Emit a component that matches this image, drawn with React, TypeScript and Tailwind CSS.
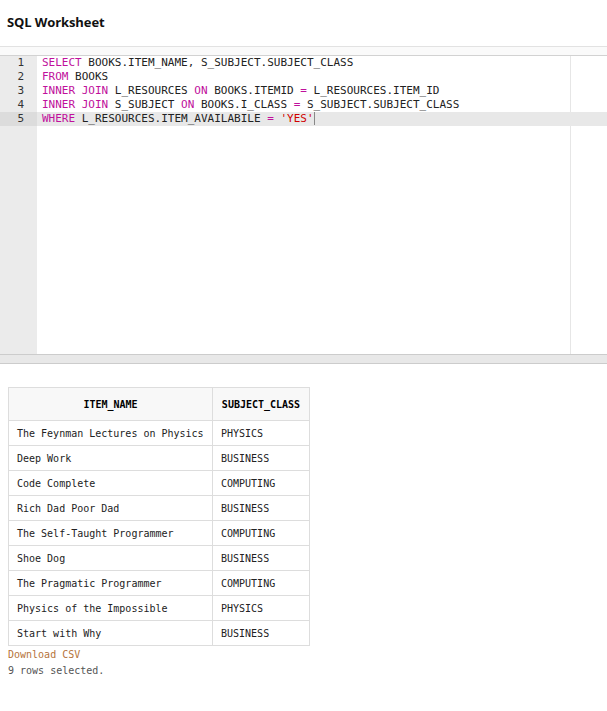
const kw = "text-[#c0109c]";
const str = "text-[#d00000]";

type Tok = [string, string?];

const lines: Tok[][] = [
  [["SELECT", kw], [" BOOKS.ITEM_NAME, S_SUBJECT.SUBJECT_CLASS"]],
  [["FROM", kw], [" BOOKS"]],
  [["INNER JOIN", kw], [" L_RESOURCES "], ["ON", kw], [" BOOKS.ITEMID "], ["=", kw], [" L_RESOURCES.ITEM_ID"]],
  [["INNER JOIN", kw], [" S_SUBJECT "], ["ON", kw], [" BOOKS.I_CLASS "], ["=", kw], [" S_SUBJECT.SUBJECT_CLASS"]],
  [["WHERE", kw], [" L_RESOURCES.ITEM_AVAILABILE "], ["=", kw], [" "], ["'YES'", str]],
];

const rows: [string, string][] = [
  ["The Feynman Lectures on Physics", "PHYSICS"],
  ["Deep Work", "BUSINESS"],
  ["Code Complete", "COMPUTING"],
  ["Rich Dad Poor Dad", "BUSINESS"],
  ["The Self-Taught Programmer", "COMPUTING"],
  ["Shoe Dog", "BUSINESS"],
  ["The Pragmatic Programmer", "COMPUTING"],
  ["Physics of the Impossible", "PHYSICS"],
  ["Start with Why", "BUSINESS"],
];

const mono = "font-['DejaVu_Sans_Mono',monospace]";

export default function App() {
  return (
    <div className="w-[607px] h-[711px] bg-white overflow-hidden font-['Open_Sans',sans-serif]">
      <div className="h-[47px] flex items-center pl-[7px] border-b border-[#e2e2e2]">
        <h1 className="text-[13px] font-bold text-[#111] tracking-[-0.1px]">SQL Worksheet</h1>
      </div>
      <div className="h-[9px] bg-[#fafafa] border-b border-[#d2d2d2]" />

      {/* editor */}
      <div className={`relative h-[298px] flex ${mono} text-[11px] leading-[14px]`}>
        <div className="w-[37px] bg-[#ebebeb] text-[#333] text-right pr-[13px] shrink-0">
          {lines.map((_, i) => (
            <div key={i} className={i === 4 ? "bg-[#dcdcdc] -mr-[13px] pr-[13px]" : ""}>{i + 1}</div>
          ))}
        </div>
        <div className="flex-1 relative">
          <div className="absolute top-0 bottom-0 left-[533px] border-l border-[#e6e6e6]" />
          {lines.map((toks, i) => (
            <div key={i} className={`relative pl-[5px] whitespace-pre text-[#222] ${i === 4 ? "bg-[#e8e8e8]" : ""}`}>
              {toks.map(([t, c], j) => (
                <span key={j} className={c}>{t}</span>
              ))}
              {i === 4 && <span className="inline-block w-[1px] h-[13px] bg-[#888] align-middle -mt-[2px]" />}
            </div>
          ))}
        </div>
      </div>
      <div className="h-[10px] bg-[#e8e8e8] border-y border-[#cccccc]" />

      {/* results */}
      <div className="pt-[23px] pl-[8px]">
        <table className={`${mono} text-[10px] border-collapse text-[#222]`}>
          <thead>
            <tr className="h-[33px] bg-[#f8f8f8]">
              <th className="w-[204px] border border-[#dddddd] font-bold text-center text-black">ITEM_NAME</th>
              <th className="w-[97px] border border-[#dddddd] font-bold text-center text-black px-[8px]">SUBJECT_CLASS</th>
            </tr>
          </thead>
          <tbody>
            {rows.map(([n, s]) => (
              <tr key={n} className="h-[25px]">
                <td className="border border-[#dddddd] pl-[8px]">{n}</td>
                <td className="border border-[#dddddd] pl-[8px]">{s}</td>
              </tr>
            ))}
          </tbody>
        </table>
        <div className={`${mono} text-[10px] leading-[16px] mt-[1px]`}>
          <a href="#" className="text-[#b5733a] block">Download CSV</a>
          <div className="text-[#555]">9 rows selected.</div>
        </div>
      </div>
    </div>
  );
}
